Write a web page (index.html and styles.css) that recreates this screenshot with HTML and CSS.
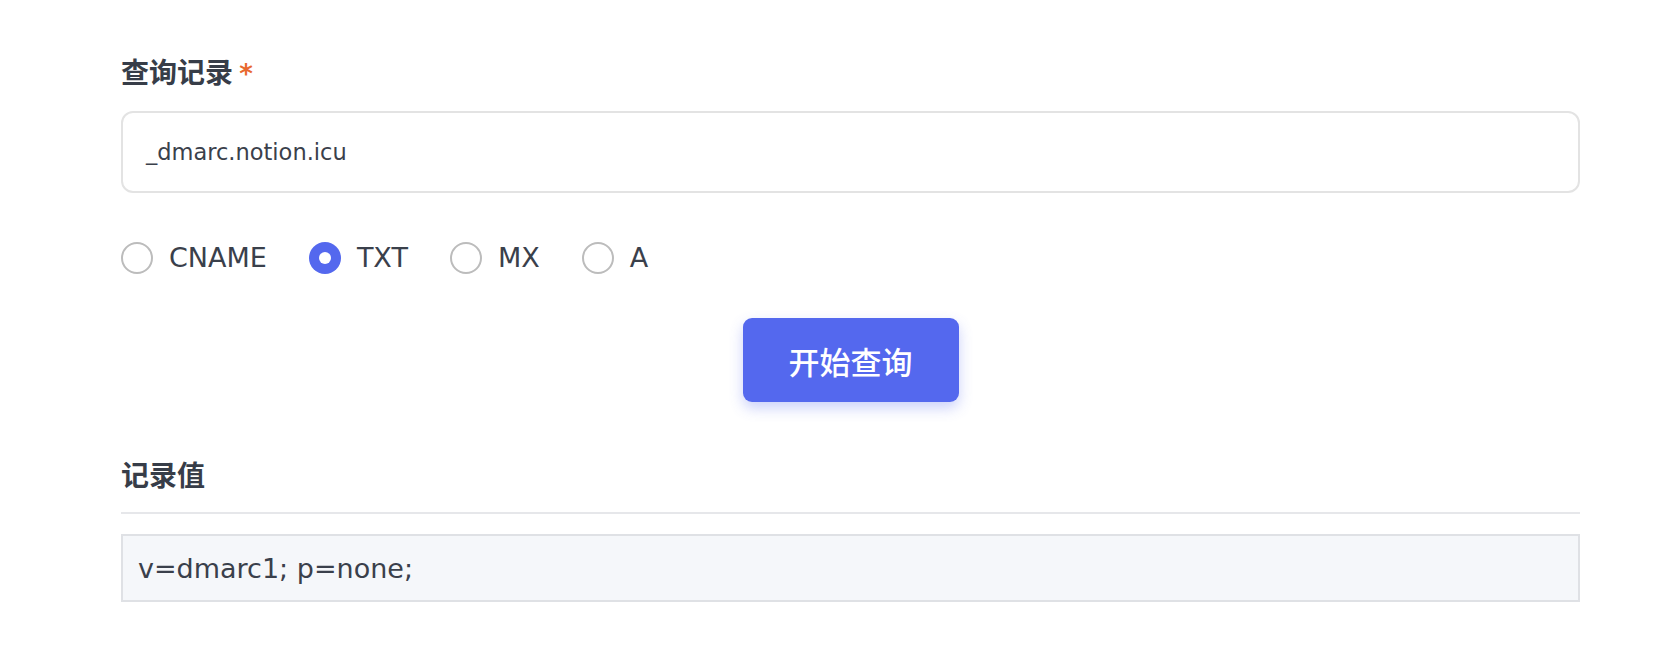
FILE: index.html
```
<!DOCTYPE html>
<html lang="zh">
<head>
<meta charset="utf-8">
<title>DNS 查询</title>
<link rel="stylesheet" href="styles.css">
</head>
<body>
<div class="form">
  <div class="field-label">查询记录 <span class="req">*</span></div>
  <div class="input">_dmarc.notion.icu</div>
  <div class="radios">
    <label class="radio"><span class="dot"></span><span class="radio-text">CNAME</span></label>
    <label class="radio checked"><span class="dot"></span><span class="radio-text">TXT</span></label>
    <label class="radio"><span class="dot"></span><span class="radio-text">MX</span></label>
    <label class="radio"><span class="dot"></span><span class="radio-text">A</span></label>
  </div>
  <div class="actions"><button class="btn">开始查询</button></div>
  <div class="field-label second">记录值</div>
  <div class="divider"></div>
  <div class="result">v=dmarc1; p=none;</div>
</div>
</body>
</html>
```
FILE: styles.css
```
html, body {
  margin: 0;
  padding: 0;
  background: #ffffff;
}
body {
  font-family: "DejaVu Sans", "Noto Sans CJK SC", sans-serif;
  color: #3a404b;
}
.form {
  width: 1459px;
  margin-left: 121px;
  padding-top: 51px;
}
.field-label {
  height: 40px;
  line-height: 40px;
  font-size: 28px;
  font-weight: 700;
  color: #373d48;
  font-family: "Noto Sans CJK SC", sans-serif;
}
.req {
  color: #e8692f;
  font-family: "DejaVu Sans", sans-serif;
  font-size: 26px;
}
.input {
  margin-top: 20px;
  height: 82px;
  box-sizing: border-box;
  border: 2px solid #e3e3e3;
  border-radius: 12px;
  padding-left: 23px;
  display: flex;
  align-items: center;
  font-size: 22.5px;
  color: #3a404b;
}
.radios {
  margin-top: 45px;
  height: 40px;
  display: flex;
  align-items: center;
  gap: 42px;
}
.radio {
  display: flex;
  align-items: center;
  gap: 16px;
}
.dot {
  width: 32px;
  height: 32px;
  box-sizing: border-box;
  border-radius: 50%;
  border: 2px solid #bcbcbc;
  background: #fff;
  display: flex;
  align-items: center;
  justify-content: center;
}
.radio.checked .dot {
  border: none;
  background: #5468ee;
}
.radio.checked .dot::after {
  content: "";
  width: 12px;
  height: 12px;
  border-radius: 50%;
  background: #fff;
}
.radio-text {
  font-size: 27px;
  color: #3a404b;
  line-height: 40px;
}
.actions {
  margin-top: 40px;
  display: flex;
  justify-content: center;
}
.btn {
  width: 216px;
  height: 84px;
  border: none;
  border-radius: 9px;
  background: #5468ee;
  color: #fff;
  font-family: "Noto Sans CJK SC", sans-serif;
  font-weight: 500;
  font-size: 31px;
  box-shadow: 0 6px 14px rgba(84, 104, 238, 0.3);
  padding: 0;
}
.field-label.second {
  margin-top: 52px;
}
.divider {
  margin-top: 18px;
  height: 2px;
  background: #e6e7ea;
}
.result {
  margin-top: 20px;
  height: 68px;
  box-sizing: border-box;
  border: 2px solid #dfe1e5;
  background: #f5f7fa;
  padding-left: 15px;
  display: flex;
  align-items: center;
  font-size: 27px;
  color: #3a404b;
}
```
